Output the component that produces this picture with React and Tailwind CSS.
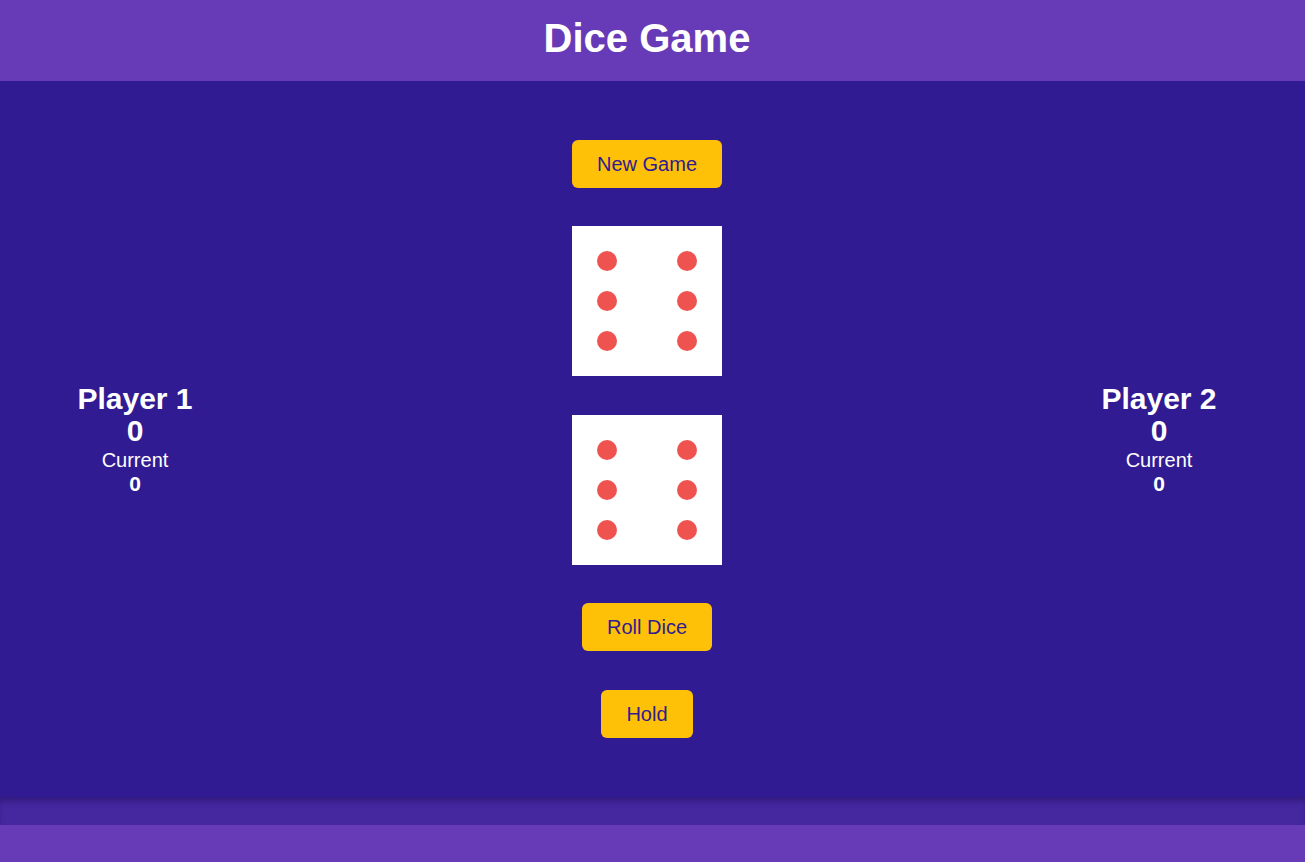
const font = { fontFamily: '"Liberation Sans", Arial, sans-serif' };

function Die() {
  return (
    <div className="w-[150px] h-[150px] bg-white flex justify-between p-[25px]">
      {[0, 1].map((c) => (
        <div key={c} className="flex flex-col justify-between">
          {[0, 1, 2].map((r) => (
            <span key={r} className="block w-[20px] h-[20px] rounded-full bg-[#ef5350]" />
          ))}
        </div>
      ))}
    </div>
  );
}

function Player({ name }) {
  return (
    <div className="w-[270px] flex flex-col items-center text-white text-center">
      <div className="text-[30px] leading-[33px] font-bold">{name}</div>
      <div className="text-[30px] leading-[32px] font-bold">0</div>
      <div className="text-[20px] leading-[24px] mt-[1px]">Current</div>
      <div className="text-[21px] leading-[24px] font-bold">0</div>
    </div>
  );
}

function GameButton({ children }) {
  return (
    <button className="h-[48px] px-[25px] rounded-[6px] bg-[#ffc107] text-[#311b92] text-[20px]">
      {children}
    </button>
  );
}

export default function App() {
  return (
    <div className="min-h-[862px] flex flex-col bg-[#311b92]" style={font}>
      <header className="h-[81px] bg-[#673ab7] flex items-center justify-center pr-[11px] pb-[5px]">
        <h1 className="text-white text-[40px] font-bold leading-none">Dice Game</h1>
      </header>

      <main className="h-[716px] flex items-center justify-between pr-[11px]">
        <Player name="Player 1" />
        <div className="flex flex-col items-center gap-[38.5px] -mt-[1px]">
          <GameButton>New Game</GameButton>
          <Die />
          <Die />
          <GameButton>Roll Dice</GameButton>
          <GameButton>Hold</GameButton>
        </div>
        <Player name="Player 2" />
      </main>

      <div className="h-[28px] bg-[#4527a0] shadow-[inset_0_6px_6px_-2px_rgba(30,15,90,0.5)]" />
      <footer className="h-[37px] bg-[#673ab7]" />
    </div>
  );
}
